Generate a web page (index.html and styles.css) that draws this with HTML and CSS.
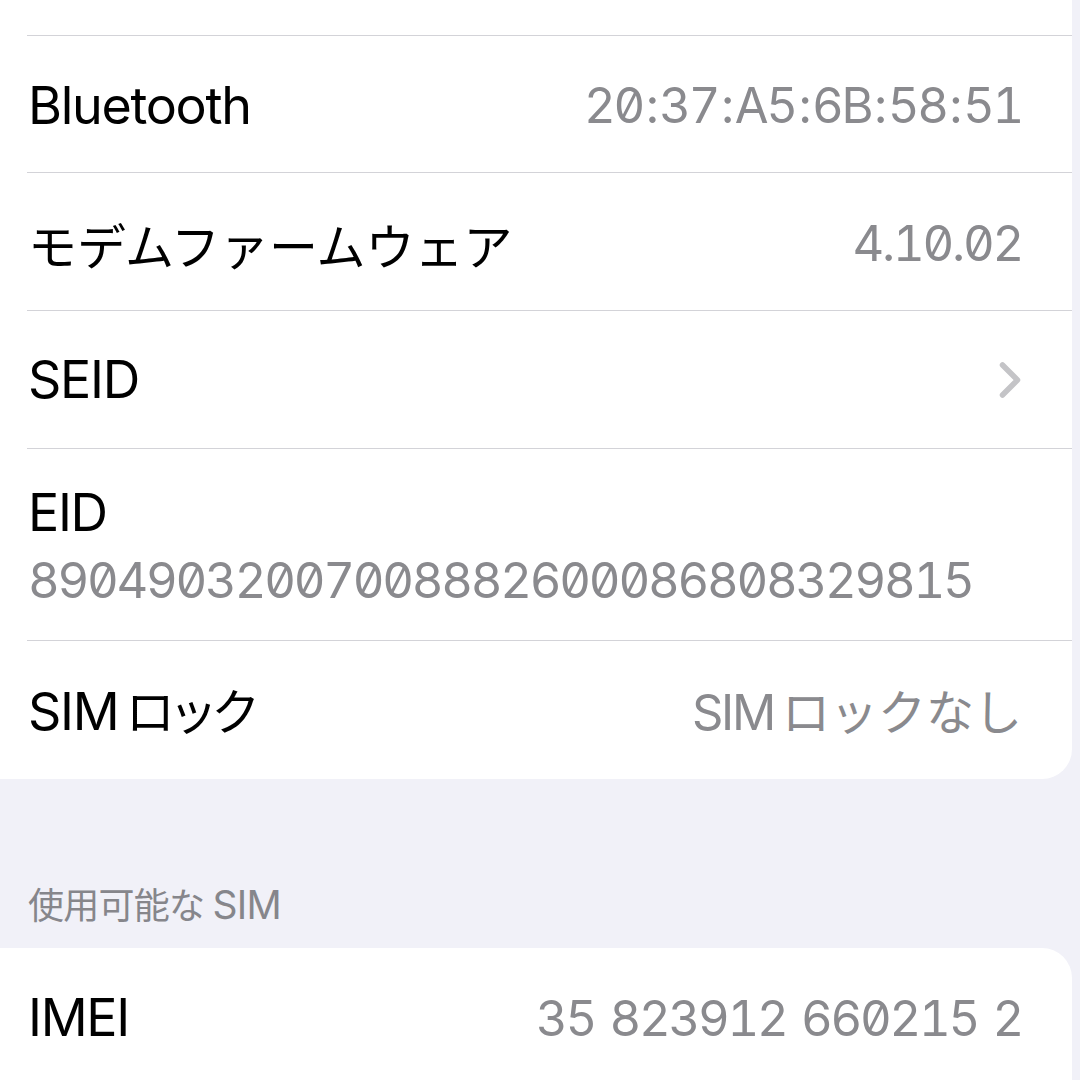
FILE: index.html
```html
<!DOCTYPE html>
<html lang="ja">
<head>
<meta charset="utf-8">
<link rel="stylesheet" href="styles.css">
</head>
<body>
<div class="screen">
  <div class="card card-top">
    <div class="cut"></div>
    <div class="row r1">
      <span class="label">Bluetooth</span>
      <span class="value">20<span class="sep">:</span>37<span class="sep">:</span>A5<span class="sep">:</span>6B<span class="sep">:</span>58<span class="sep">:</span>51</span>
    </div>
    <div class="row r2">
      <span class="label ja">モデムファームウェア</span>
      <span class="value">4.10.02</span>
    </div>
    <div class="row r3">
      <span class="label">SEID</span>
      <svg class="chev" width="24" height="38" viewBox="0 0 24 38"><path d="M4.5 4 L19.5 19 L4.5 34" fill="none" stroke="#c4c4c7" stroke-width="5.5" stroke-linecap="round" stroke-linejoin="round"/></svg>
    </div>
    <div class="row row-stack">
      <span class="label">EID</span>
      <span class="value">89049032007008882600086808329815</span>
    </div>
    <div class="row r5">
      <span class="label">SIM<span class="ja palt">ロック</span></span>
      <span class="value">SIM<span class="ja kana">ロックなし</span></span>
    </div>
  </div>
  <div class="section-header">使用可能な<span class="lat">SIM</span></div>
  <div class="card card-bottom">
    <div class="row first">
      <span class="label">IMEI</span>
      <span class="value">35 823912 660215 2</span>
    </div>
  </div>
</div>
</body>
</html>
```
FILE: styles.css
```css
html, body {
  margin: 0;
  padding: 0;
}
body {
  background: #f1f1f8;
  font-family: Inter, "Noto Sans CJK JP", sans-serif;
  color: #000;
  width: 1080px;
  height: 1080px;
  overflow: hidden;
}
.screen {
  display: flex;
  flex-direction: column;
}
.card {
  width: 1072px;
  background: #fff;
}
.card-top {
  border-bottom-right-radius: 30px;
}
.card-bottom {
  border-top-right-radius: 30px;
  height: 140px;
}
.cut {
  height: 35px;
}
.row {
  margin-left: 27px;
  border-top: 1px solid #d3d3d8;
  padding: 3px 50px 0 1px;
  display: flex;
  align-items: center;
  justify-content: space-between;
  box-sizing: border-box;
  height: 137px;
}
.r2, .r3 { height: 138px; }
.r3 { padding-top: 0; }
.r5 { height: 139px; padding-top: 1px; }
.card-bottom .row.first {
  border-top: none;
  height: 140px;
  padding-top: 0;
}
.label {
  font-size: 52px;
  letter-spacing: -0.025em;
  line-height: 1;
  white-space: nowrap;
}
.value {
  font-size: 49px;
  color: #8a8a8e;
  line-height: 1;
  white-space: nowrap;
  font-feature-settings: "tnum" 1, "zero" 1;
  letter-spacing: -0.046em;
  word-spacing: 3.5px;
}
.sep {
  padding: 0 2.7px;
}
.ja {
  font-family: "Noto Sans CJK JP", sans-serif;
  font-size: 49px;
  letter-spacing: 0;
}
.palt {
  font-feature-settings: "palt" 1;
  margin-left: 8px;
}
.kana {
  font-size: 48px;
  margin-left: 8px;
  font-feature-settings: normal;
}
.row-stack {
  height: 192px;
  flex-direction: column;
  align-items: flex-start;
  justify-content: flex-start;
  padding-top: 38px;
  gap: 17px;
}
.chev {
  display: block;
}
.section-header {
  height: 169px;
  box-sizing: border-box;
  padding: 106px 0 0 28px;
  font-family: "Noto Sans CJK JP", sans-serif;
  font-size: 36px;
  line-height: 1;
  color: #86868b;
  letter-spacing: -0.02em;
}
.section-header .lat {
  font-family: Inter, sans-serif;
  font-size: 39px;
  margin-left: 8px;
}
```
